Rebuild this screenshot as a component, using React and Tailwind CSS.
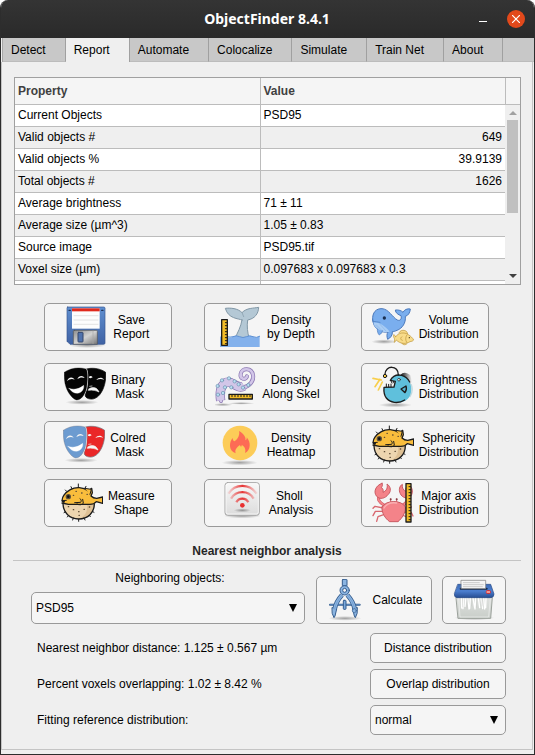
import React from "react";

const INK = "#1c1c1c";

function Icon({ box, children }) {
  return (
    <svg viewBox={box} className="size-[42px] shrink-0" fill="none" strokeLinecap="round" strokeLinejoin="round" aria-hidden="true">
      <defs>
        <radialGradient id="ground">
          <stop offset="0" stopColor="#000" stopOpacity="0.35" />
          <stop offset="1" stopColor="#000" stopOpacity="0" />
        </radialGradient>
      </defs>
      {children}
    </svg>
  );
}

function FloppyIcon() {
  return (
    <Icon box="76 24 126 126">
      <defs>
        <linearGradient id="fl-body" x1="0" y1="0" x2="0" y2="1">
          <stop offset="0" stopColor="#5f8fd0" />
          <stop offset="1" stopColor="#3f62a4" />
        </linearGradient>
        <linearGradient id="fl-metal" x1="0" y1="0" x2="1" y2="1">
          <stop offset="0" stopColor="#8c8c8c" />
          <stop offset="0.5" stopColor="#d2d2d2" />
          <stop offset="1" stopColor="#777" />
        </linearGradient>
      </defs>
      <ellipse cx="140" cy="142" rx="56" ry="8" fill="url(#ground)" />
      <path d="M81 27h108q4 0 4 4v104q0 4-4 4H88l-9-9V31q0-4 2-4z" fill="url(#fl-body)" stroke="#37568f" strokeWidth="2" />
      <rect x="94" y="31" width="83" height="61" fill="#fdfdfd" />
      <rect x="94" y="31" width="83" height="9" fill="#e0291c" />
      <path d="M100 53h72M100 66h72M100 79h72" stroke="#d6d6d6" strokeWidth="2" />
      <path d="M85 37h4M183 37h4" stroke="#1d3157" strokeWidth="4" />
      <path d="M101 97h66q3 0 3 3v39H98v-39q0-3 3-3z" fill="url(#fl-metal)" stroke="#555" strokeWidth="2" />
      <rect x="112" y="103" width="15" height="29" rx="2" fill="#5072ad" stroke="#34466b" strokeWidth="3" />
      <path d="M157 99v38" stroke="#a8a8a8" strokeWidth="2" />
    </Icon>
  );
}

function MasksIcon({ left, right, line }) {
  return (
    <Icon box="72 204 126 126">
      <ellipse cx="126" cy="313" rx="50" ry="7" fill="url(#ground)" />
      <path d="M140 213C152 209 178 209 197 223C199 249 192 273 180 289C169 303 154 307 141 300C136 297 134 292 137 284C145 262 146 238 140 213z" fill={right} stroke={line} strokeWidth="2" />
      <path d="M147 236c4-3 8-2 11 2-4 3-8 3-11 1zM169 246c7-9 17-9 23-1-7-3-14-3-23 1z" fill="#f5f5f5" />
      <path d="M149 265l7-1M146 273c13-8 25-5 31 9-8-4-17-7-31-5z" fill="#f5f5f5" stroke="#f5f5f5" strokeWidth="2" />
      <path d="M73 223C92 209 118 207 138 213C144 220 143 252 139 272C134 292 122 306 110 306C98 303 85 287 78 267C73 252 72 236 73 223z" fill={left} stroke="#f5f5f5" strokeWidth="5" />
      <path d="M73 223C92 209 118 207 138 213C144 220 143 252 139 272C134 292 122 306 110 306C98 303 85 287 78 267C73 252 72 236 73 223z" fill={left} stroke={line} strokeWidth="1" />
      <path d="M81 250c3-12 16-16 23-5-8-4-16-2-23 5zM112 243c4-11 17-12 22-3-8-3-14-2-22 3z" fill="#f5f5f5" />
      <path d="M87 271c17 6 32 1 44-9 2 12-7 23-19 24-10 0-19-6-25-15z" fill="#fff" stroke="#fff" strokeWidth="1" />
    </Icon>
  );
}

function PufferIcon() {
  return (
    <Icon box="60 204 126 126">
      <path d="M66 269C67 297 86 315 113 315C141 315 160 296 160 269z" fill="#edd5af" />
      <path d="M110 269C122 269 135 269 160 269C160 296 141 315 113 315C138 305 140 285 138 269z" fill="#dfc195" />
      <path d="M66 269C67 297 86 315 113 315C141 315 160 296 160 269" stroke={INK} strokeWidth="4" />
      <path d="M64 262c-3-12 8-26 24-35 16-9 38-8 54 4l10-8 2 13-4 10c5 5 11 7 17 7l18-4v19l-19-5c-5 6-15 9-24 8H82l-19-4 7-4z" fill="#f9bd3c" stroke={INK} strokeWidth="4" />
      <path d="M131 223l20 3-4 15" fill="#f9bd3c" stroke={INK} strokeWidth="3" />
      <path d="M101 266l18-1c3-4 2-9-2-11M108 270c6 4 15 3 19-2l-2-12" stroke={INK} strokeWidth="3" />
      <circle cx="82" cy="248" r="8" fill="#594e3c" />
      <circle cx="82" cy="248" r="4" fill="#111" />
      <path d="M63 260l13-1" stroke={INK} strokeWidth="3" />
      <path d="M112 219v-9M93 224l-3-6M132 223l3-6M77 232l-4-4M74 293l-5 3M83 304l-4 5M97 312l-2 6M113 316v6M129 312l3 6M144 304l4 4M154 292l5 3" stroke={INK} strokeWidth="3" />
      <path d="M105 232h1M122 237h1M138 241h1M97 244h1M82 278h1M97 287h1M113 293h1M129 286h1M145 279h1M114 304h1" stroke="#5b4933" strokeWidth="4" />
    </Icon>
  );
}

function Ruler({ x, y, length, vertical, thick = 15 }) {
  const ticks = [];
  for (let i = 9; i < length - 4; i += 9) ticks.push(i);
  return (
    <g>
      <rect x={x} y={y} width={vertical ? thick : length} height={vertical ? length : thick} fill="#f3bd28" stroke={INK} strokeWidth="4" />
      {ticks.map((t) =>
        vertical ? (
          <path key={t} d={`M${x + thick - 6} ${y + t}h5`} stroke={INK} strokeWidth="3" />
        ) : (
          <path key={t} d={`M${x + t} ${y + 2}v5`} stroke={INK} strokeWidth="3" />
        )
      )}
    </g>
  );
}

function WhaleTailIcon() {
  return (
    <Icon box="76 24 126 126">
      <path d="M142 66C131 61 101 63 92 31C107 29 130 31 142 44C156 29 177 31 192 28C191 48 180 62 159 66C156 86 159 103 163 120H121C128 106 139 86 142 66z" fill="#b4c8d5" stroke="#8197a6" strokeWidth="3" />
      <path d="M143 46l4 10" stroke="#8197a6" strokeWidth="2" />
      <path d="M76 116q10-6 19 0t20 0q10-5 20 0t20 0q10-5 20 0t20-1v32H76z" fill="#83b1ec" />
      <path d="M98 116q8 3 17 0q10-5 20 0t20 0q10-5 20 0t20-1" stroke="#5e91d4" strokeWidth="3" />
      <Ruler x={81} y={65} length={77} vertical thick={17} />
    </Icon>
  );
}

function TentacleIcon() {
  const arm = "M79 309C73 275 82 247 105 251C122 254 128 271 147 268C166 265 178 247 175 231C171 209 142 208 138 228C135 243 153 248 157 235";
  const cups = [[70, 290], [69, 264], [82, 247], [103, 241], [120, 250], [85, 285], [91, 268], [110, 268], [132, 259], [145, 269], [161, 261]];
  return (
    <Icon box="61 204 126 126">
      <ellipse cx="84" cy="320" rx="30" ry="5" fill="url(#ground)" />
      <ellipse cx="140" cy="316" rx="40" ry="4" fill="url(#ground)" />
      <path d="M78 308C72 268 88 246 108 254C124 262 134 272 148 264" stroke="#8873b0" strokeWidth="28" strokeLinecap="butt" />
      <path d={arm} stroke="#8873b0" strokeWidth="12" />
      <path d="M78 307C72 268 88 246 108 254C124 262 134 272 148 264" stroke="#d2c6e8" strokeWidth="24" strokeLinecap="butt" />
      <path d={arm} stroke="#d2c6e8" strokeWidth="8" />
      {cups.map(([cx, cy]) => (
        <ellipse key={`${cx}-${cy}`} cx={cx} cy={cy} rx="5" ry="5" fill="#b9dff2" stroke="#6d8fae" strokeWidth="2" />
      ))}
      <Ruler x={103} y={289} length={70} thick={14} />
    </Icon>
  );
}

function FlameIcon() {
  return (
    <Icon box="72 24 126 126">
      <ellipse cx="131" cy="140" rx="54" ry="8" fill="url(#ground)" />
      <circle cx="132" cy="81" r="52" fill="#fccc58" />
      <path d="M129 45C144 53 151 65 148 73C152 72 153 67 152 64C165 78 165 103 147 111C151 99 145 91 137 86C138 92 134 94 132 87C124 93 115 100 119 112C97 104 99 79 110 66C110 72 112 75 116 76C126 68 132 57 129 45z" fill="#fd6b55" />
    </Icon>
  );
}

function ShollIcon() {
  return (
    <Icon box="79 201 126 126">
      <defs>
        <linearGradient id="sh-plate" x1="0" y1="0" x2="0" y2="1">
          <stop offset="0" stopColor="#f8f8f8" />
          <stop offset="1" stopColor="#dcdcdc" />
        </linearGradient>
        <linearGradient id="sh-arc" x1="0" y1="0" x2="1" y2="0">
          <stop offset="0" stopColor="#ef4444" stopOpacity="0.15" />
          <stop offset="0.5" stopColor="#e53535" />
          <stop offset="1" stopColor="#ef4444" stopOpacity="0.15" />
        </linearGradient>
      </defs>
      <ellipse cx="140" cy="303" rx="56" ry="7" fill="url(#ground)" />
      <rect x="88" y="203" width="103" height="98" rx="8" fill="url(#sh-plate)" stroke="#a5a5a5" strokeWidth="3" />
      <rect x="91" y="206" width="97" height="91" rx="6" stroke="#fff" strokeWidth="2" />
      <ellipse cx="140" cy="286" rx="26" ry="6" fill="url(#ground)" />
      <path d="M98 236C118 205 162 205 183 236M106 251C121 225 159 225 174 251M122 262C129 247 151 247 158 262" stroke="url(#sh-arc)" strokeWidth="7" strokeLinecap="butt" />
      <circle cx="140" cy="271" r="7" fill="#e93030" />
    </Icon>
  );
}

function WhaleIcon() {
  return (
    <Icon box="58 24 126 126">
      <ellipse cx="94" cy="131" rx="38" ry="7" fill="url(#ground)" />
      <path d="M60 66C58 43 71 31 88 32C108 33 118 57 134 66C142 70 148 63 145 53C137 50 128 45 128 36C138 35 147 38 151 43C155 35 164 31 173 33C172 45 166 53 158 55C160 75 149 91 133 97C127 100 122 101 119 101C120 112 114 119 105 124C102 115 102 108 106 102C85 105 63 94 60 66z" fill="#7aaeee" stroke="#4a78bb" strokeWidth="3" />
      <path d="M62 74C76 72 96 82 111 101C90 106 68 97 62 74z" fill="#a9cdf5" />
      <path d="M71 81l18 18M66 81l13 15M82 79l18 20" stroke="#6e9bd5" strokeWidth="1" />
      <path d="M74 93c0 8 1 13 6 18 6-4 9-8 9-13M60 70c8 1 15 1 22 3" fill="#7aaeee" stroke="#4a78bb" strokeWidth="2" />
      <circle cx="95" cy="60" r="5" fill="#1b3153" />
      <path d="M139 105C141 97 153 94 161 100C164 103 165 107 165 110M146 133C149 141 157 143 163 137" fill="#f8dc8a" stroke="#b99238" strokeWidth="2" />
      <path d="M129 116C137 104 154 101 167 110C174 114 180 120 183 126C180 130 176 130 172 131C160 139 142 138 131 126C129 130 127 132 124 133C126 128 126 125 125 121C123 118 122 114 123 110C126 111 128 113 129 116z" fill="#f8dc8a" stroke="#b99238" strokeWidth="2" />
      <path d="M148 116C142 119 143 126 149 127M162 112C158 118 158 127 162 133" stroke="#b99238" strokeWidth="2" />
      <circle cx="170" cy="119" r="2" fill="#4c3a14" />
    </Icon>
  );
}

function AnglerIcon() {
  return (
    <Icon box="58 204 126 126">
      <defs>
        <linearGradient id="an-fade" x1="0" y1="0" x2="1" y2="0">
          <stop offset="0" stopColor="#111" />
          <stop offset="1" stopColor="#111" stopOpacity="0" />
        </linearGradient>
      </defs>
      <ellipse cx="128" cy="321" rx="50" ry="7" fill="url(#ground)" />
      <path d="M144 231c6-9 18-9 29 1l5 19-8 14z" fill="url(#an-fade)" />
      <path d="M113 247C120 234 133 229 147 232C160 235 169 245 174 260C178 277 175 294 164 304C148 319 116 318 101 300C94 291 93 280 94 268L124 267L128 250z" fill="#5fc0dc" />
      <path d="M156 306C136 319 112 314 101 300C94 291 93 280 94 268L124 267L128 250L113 247C120 234 133 229 147 232C158 235 166 242 171 252" stroke={INK} strokeWidth="4" />
      <path d="M137 231C138 201 98 200 97 229" stroke={INK} strokeWidth="4" />
      <circle cx="97" cy="234" r="5" fill="#f9cc43" stroke={INK} strokeWidth="3" />
      <path d="M61 241l25 5M67 266l15-22M77 276l12-24" stroke="#f8cf4c" strokeWidth="5" />
      <path d="M101 266v-8M108 266v-7M115 266v-8M115 249l3 6M122 250l2 5" stroke={INK} strokeWidth="3" />
      <circle cx="139" cy="245" r="4" fill="#e7f5f8" stroke={INK} strokeWidth="2" />
      <path d="M160 264L145 273L157 284C162 277 162 270 160 264z" fill="#58b5d1" stroke={INK} strokeWidth="4" />
      <path d="M176 260c4 12 2 27-4 36" stroke="#8bbcc9" strokeWidth="4" opacity="0.5" />
    </Icon>
  );
}

function CrabIcon() {
  return (
    <Icon box="58 201 126 126">
      <path d="M95 271C80 262 70 251 84 239M150 271C167 259 168 250 156 240" stroke="#c95b63" strokeWidth="9" />
      <path d="M95 271C80 262 70 251 84 239M150 271C167 259 168 250 156 240" stroke="#f48389" strokeWidth="6" />
      <path d="M92 279L67 274L61 280M90 289L68 289L61 302M93 299L76 305L72 319M151 281L176 276M154 291L176 293L181 303M148 300L166 307L169 318" stroke="#d8666e" strokeWidth="4" />
      <path d="M88 205C69 211 61 231 72 244C82 255 98 250 107 238C116 229 115 215 103 207C106 220 101 227 91 232C93 225 90 219 86 218C90 212 90 209 88 205z" fill="#f48389" stroke="#c95b63" strokeWidth="3" />
      <path d="M161 205C179 211 184 231 174 244C164 253 148 248 143 236C137 225 141 212 149 208C147 219 153 226 160 230C158 221 160 216 164 214z" fill="#f48389" stroke="#c95b63" strokeWidth="3" />
      <path d="M114 263v-11M132 263v-11" stroke="#c95b63" strokeWidth="3" />
      <circle cx="114" cy="253" r="3" fill="#873c43" />
      <circle cx="132" cy="253" r="3" fill="#873c43" />
      <path d="M88 276C100 254 147 254 158 276C160 292 148 310 136 320H111C98 311 86 293 88 276z" fill="#f48389" stroke="#c95b63" strokeWidth="3" />
      <path d="M94 279c8-14 24-17 38-15" stroke="#fab0b2" strokeWidth="4" />
      <Ruler x={160} y={206} length={115} vertical thick={15} />
    </Icon>
  );
}

function CompassIcon() {
  const legs = "M127 180C116 192 108 206 105 222M143 180C154 192 162 206 165 222";
  const points = "M98 218L111 222L106 243L103 248L98 236zM172 218L159 222L164 243L167 248L172 236z";
  return (
    <Icon box="76 132 126 126">
      <ellipse cx="136" cy="250" rx="50" ry="7" fill="url(#ground)" />
      <path d="M91 209h89" stroke="#355d8e" strokeWidth="6" />
      <path d="M91 209h89" stroke="#6f9ed1" strokeWidth="2" />
      <path d={legs} stroke="#355d8e" strokeWidth="14" strokeLinecap="butt" />
      <path d={points} fill="#8bb5e2" stroke="#355d8e" strokeWidth="3" />
      <path d={legs} stroke="#8bb5e2" strokeWidth="9" strokeLinecap="butt" />
      <path d={legs} stroke="#6995c9" strokeWidth="2" />
      <rect x="128" y="133" width="14" height="20" rx="2" fill="#8bb5e2" stroke="#355d8e" strokeWidth="3" />
      <circle cx="135" cy="166" r="14" fill="#8bb5e2" stroke="#355d8e" strokeWidth="3" />
      <circle cx="135" cy="166" r="6" fill="#f5f5f5" stroke="#355d8e" strokeWidth="3" />
      <rect x="131" y="196" width="8" height="27" rx="2" fill="#7ba9dc" stroke="#355d8e" strokeWidth="3" />
      <circle cx="164" cy="227" r="6" fill="#8bb5e2" stroke="#355d8e" strokeWidth="2" />
    </Icon>
  );
}

function ShredderIcon() {
  return (
    <Icon box="459 132 126 126">
      <defs>
        <linearGradient id="sd-lid" x1="0" y1="0" x2="0" y2="1">
          <stop offset="0" stopColor="#3d6cb8" />
          <stop offset="0.5" stopColor="#4c7fd0" />
          <stop offset="1" stopColor="#274d92" />
        </linearGradient>
        <linearGradient id="sd-bin" x1="0" y1="0" x2="0" y2="1">
          <stop offset="0" stopColor="#dfe1df" />
          <stop offset="1" stopColor="#c9cec9" />
        </linearGradient>
      </defs>
      <ellipse cx="523" cy="248" rx="60" ry="8" fill="url(#ground)" />
      <path d="M469 187h108l-5 63H475z" fill="url(#sd-bin)" stroke="#9ba19b" strokeWidth="3" />
      <path d="M476 190l4 56h86l5-56" stroke="#eef0ee" strokeWidth="2" />
      <path d="M485 189v30M491 189l-2 32M498 189l-3 25M503 189l4 33M511 189l-2 31M519 189l5 30M527 189l-2 33M535 189l4 29M543 189l5 32M551 189l3 33M558 189l-1 29" stroke="#fff" strokeWidth="4" />
      <path d="M488 190v26M501 190v29M515 190v23M530 190v27M546 190v23" stroke="#b6bab6" strokeWidth="1" />
      <path d="M474 148h98l10 29q0 10-9 11H471q-9-1-8-11z" fill="url(#sd-lid)" stroke="#274a87" strokeWidth="2" />
      <path d="M482 161h78" stroke="#162847" strokeWidth="6" />
      <path d="M484 136h73v25h-73z" fill="#f5f5f5" stroke="#777" strokeWidth="2" />
      <path d="M490 143h48M490 149h60M490 155h57" stroke="#b4b4b4" strokeWidth="2" />
      <ellipse cx="565" cy="171" rx="8" ry="6" fill="#dc2d2d" />
      <path d="M561 171h8" stroke="#fff" strokeWidth="3" />
    </Icon>
  );
}

const blackMasks = <MasksIcon left="#050505" right="#050505" line="#050505" />;
const colorMasks = <MasksIcon left="#6c9bd0" right="#ea2728" line="#6d6d78" />;

const actionColumns = [
  {
    id: "export",
    className: "mr-8 grow basis-0",
    actions: [
      { lines: "Save\nReport", icon: <FloppyIcon /> },
      { lines: "Binary  \nMask ", icon: blackMasks },
      { lines: "Colred  \nMask ", icon: colorMasks },
      { lines: "Measure\nShape", icon: <PufferIcon /> },
    ],
  },
  {
    id: "density",
    className: "mr-[30px] grow basis-0",
    actions: [
      { lines: "Density\nby Depth", icon: <WhaleTailIcon /> },
      { lines: "Density\nAlong Skel", icon: <TentacleIcon /> },
      { lines: "Density\nHeatmap", icon: <FlameIcon /> },
      { lines: "Sholl \nAnalysis", icon: <ShollIcon /> },
    ],
  },
  {
    id: "distribution",
    className: "grow basis-0",
    actions: [
      { lines: "Volume\nDistribution", icon: <WhaleIcon /> },
      { lines: "Brightness\nDistribution", icon: <AnglerIcon /> },
      { lines: "Sphericity\nDistribution", icon: <PufferIcon /> },
      { lines: "Major axis\nDistribution", icon: <CrabIcon /> },
    ],
  },
];

const tabs = ["Detect", "Report", "Automate", "Colocalize", "Simulate", "Train Net", "About"];

const properties = [
  ["Current Objects", "PSD95"],
  ["Valid objects #", 649],
  ["Valid objects %", 39.9139],
  ["Total objects #", 1626],
  ["Average brightness", "71 ± 11"],
  ["Average size (µm^3)", "1.05 ± 0.83"],
  ["Source image", "PSD95.tif"],
  ["Voxel size (µm)", "0.097683 x 0.097683 x 0.3"],
  ["", ""],
];

const control = "rounded-[5px] border border-[#999] bg-[#f5f5f5]";

function Dropdown({ id, value, className }) {
  return (
    <div className={`relative ${className}`}>
      <select id={id} defaultValue={value} className={`h-full w-full appearance-none pr-6 pl-1 ${control}`}>
        <option>{value}</option>
      </select>
      <svg viewBox="0 0 8 8" className="pointer-events-none absolute inset-y-0 right-2 my-auto size-2" aria-hidden="true">
        <path d="M0 0h8L4 8z" fill="#000" />
      </svg>
    </div>
  );
}

function TitleBar() {
  return (
    <header className="flex h-[38px] shrink-0 items-center bg-linear-to-b from-[#343434] to-[#2a2a2a] pr-[9px] pl-[54px] text-white">
      <h1 className="grow text-center font-['Noto_Sans'] text-sm font-bold">ObjectFinder 8.4.1</h1>
      <button aria-label="Minimize" className="mr-5 flex h-5 w-2 items-end pb-[7px]">
        <span className="h-px w-2 bg-white" />
      </button>
      <button aria-label="Close" className="flex size-[18px] items-center justify-center rounded-full bg-[#e2491b]">
        <svg viewBox="0 0 8 8" className="size-2" stroke="#fff" strokeWidth="1.2" aria-hidden="true">
          <path d="M0 0l8 8M8 0L0 8" />
        </svg>
      </button>
    </header>
  );
}

function TabBar() {
  return (
    <div role="tablist" className="ml-px flex h-6 shrink-0 border-l border-[#a8a8a8] bg-[#c8c8c8]">
      {tabs.map((name) => {
        const active = name === "Report";
        return (
          <button
            key={name}
            role="tab"
            aria-selected={active}
            className={`border-r border-r-[#a0a0a0] pr-[19px] pl-2 ${
              active ? "bg-[#efefef]" : "border-b border-b-[#bcbcbc]"
            }`}
          >
            {name}
          </button>
        );
      })}
      <div className="grow border-b border-[#bcbcbc]" />
    </div>
  );
}

function PropertyTable() {
  return (
    <div className="mr-[11px] ml-3 flex h-[208px] overflow-hidden border border-[#a0a0a0] bg-white">
      <div className="grow overflow-hidden">
        <table className="w-full table-fixed border-collapse text-left">
          <thead>
            <tr className="h-[26px] bg-[#f5f5f5] text-[#404040]">
              <th className="border-r border-b border-[#bcbcbc] px-[3px] py-0">Property</th>
              <th className="border-b border-[#bcbcbc] px-[3px] py-0">Value</th>
            </tr>
          </thead>
          <tbody>
            {properties.map(([name, value]) => (
              <tr key={name} className="h-[22px] even:bg-[#efefef]">
                <td className="border-r border-b border-[#bcbcbc] px-[3px] py-0">{name}</td>
                <td className={`border-b border-[#bcbcbc] px-[3px] py-0 ${typeof value === "number" ? "text-right" : ""}`}>{value}</td>
              </tr>
            ))}
          </tbody>
        </table>
      </div>
      <div className="flex w-[15px] shrink-0 flex-col bg-[#efefef]">
        <div className="h-[27px] shrink-0 border-b border-l border-[#bcbcbc] bg-[#f5f5f5]" />
        <div className="flex grow flex-col items-center px-[2px] pt-[6px] pb-[6px]">
          <svg viewBox="0 0 8 4" className="h-1 w-2 shrink-0" aria-hidden="true">
            <path d="M0 4L4 0L8 4z" fill="#a0a0a0" />
          </svg>
          <div className="mt-[5px] h-[93px] w-full bg-[#c0c0c0]" />
          <svg viewBox="0 0 8 4" className="mt-auto h-1 w-2 shrink-0" aria-hidden="true">
            <path d="M0 0L4 4L8 0z" fill="#404040" />
          </svg>
        </div>
      </div>
    </div>
  );
}

function ActionGrid() {
  return (
    <div className="mt-[18px] mr-[43px] ml-[42px] flex">
      {actionColumns.map((column) => (
        <div key={column.id} className={`grid grid-rows-[60px_58px_58px_48px] ${column.className}`}>
          {column.actions.map((action) => (
            <button key={action.lines} className={`flex h-12 w-full items-center justify-center gap-[5px] ${control}`}>
              {action.icon}
              <span className="whitespace-pre">{action.lines}</span>
            </button>
          ))}
        </div>
      ))}
    </div>
  );
}

function NeighborAnalysis() {
  return (
    <section>
      <h2 className="mx-[11px] mt-[17px] border-b border-[#c4c4c4] pb-[2px] text-center font-bold text-[#262626]">
        Nearest neighbor analysis
      </h2>
      <div className="mt-[10px] mr-[26px] ml-[29px] flex items-end">
        <div className="mr-[11px] flex grow flex-col gap-[7px]">
          <label htmlFor="neighbors" className="pl-1 text-center">Neighboring objects:</label>
          <Dropdown id="neighbors" value="PSD95" className="h-8" />
        </div>
        <button className={`mr-[10px] flex h-12 w-[116px] items-center justify-center gap-[5px] ${control}`}>
          <CompassIcon />
          Calculate
        </button>
        <button aria-label="Delete results" className={`flex h-12 w-16 items-center justify-center ${control}`}>
          <ShredderIcon />
        </button>
      </div>
      <div className="mt-[9px] mr-[26px] ml-[35px] grid auto-rows-[30px] grid-cols-[1fr_136px] items-center gap-y-[6px]">
        <p>Nearest neighbor distance: 1.125 ± 0.567 µm</p>
        <button className={`h-[30px] ${control}`}>Distance distribution</button>
        <p>Percent voxels overlapping: 1.02 ± 8.42 %</p>
        <button className={`h-[30px] ${control}`}>Overlap distribution</button>
        <label htmlFor="fitting">Fitting reference distribution:</label>
        <Dropdown id="fitting" value="normal" className="h-[30px]" />
      </div>
    </section>
  );
}

export default function App() {
  return (
    <div className="min-h-screen bg-white font-['Liberation_Sans',Arial,sans-serif] text-xs leading-[14px] text-black">
      <div className="flex min-h-screen flex-col overflow-hidden rounded-t-lg border-x border-b border-[#2d2d2d] bg-[#efefef]">
        <TitleBar />
        <TabBar />
        <main className="mr-px mb-1 grow border-x border-b border-[#c4c4c4] pt-[15px]">
          <PropertyTable />
          <ActionGrid />
          <NeighborAnalysis />
        </main>
      </div>
    </div>
  );
}
